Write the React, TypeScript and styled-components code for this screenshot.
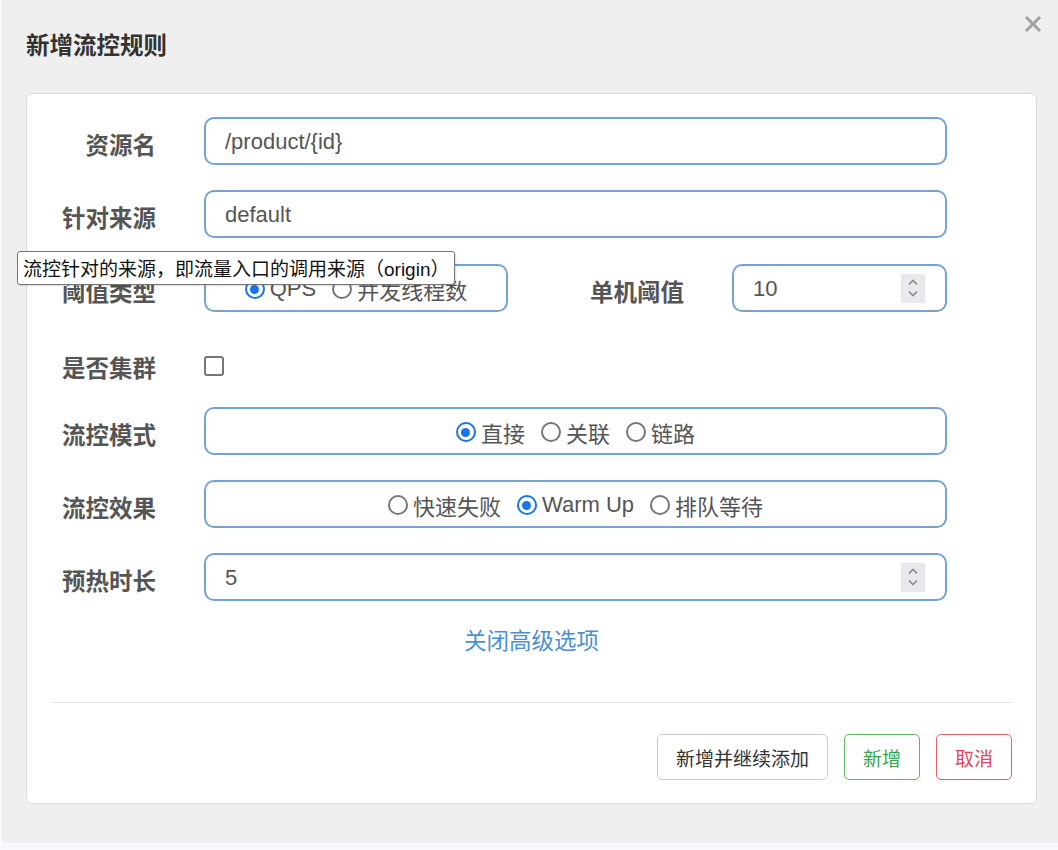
import React from 'react';
import styled, { createGlobalStyle } from 'styled-components';

const GlobalStyle = createGlobalStyle`
  html, body {
    margin: 0;
    padding: 0;
    background: #f8f9fc;
  }
  body {
    font-family: "Liberation Sans", "Noto Sans CJK SC", sans-serif;
  }
`;

const FONT = `"Liberation Sans", "Noto Sans CJK SC", sans-serif`;

const Dialog = styled.div`
  margin-left: 2px;
  width: 1056px;
  height: 843px;
  background: #efefef;
  border-radius: 0 0 0 4px;
  box-sizing: border-box;
  overflow: hidden;
`;

const Header = styled.div`
  height: 93px;
  display: flex;
  align-items: center;
  justify-content: space-between;
  padding: 0 16px 6px 24px;
  box-sizing: border-box;
`;

const Title = styled.h4`
  margin: 0;
  font-family: ${FONT};
  font-size: 23.5px;
  font-weight: bold;
  color: #333;
`;

const CloseButton = styled.button`
  align-self: flex-start;
  margin-top: 15px;
  border: 0;
  background: none;
  padding: 0;
  width: 18px;
  height: 18px;
  cursor: pointer;
`;

const Card = styled.div`
  margin: 0 21px 0 24px;
  background: #fff;
  border: 1px solid #dcdcdc;
  border-radius: 6px;
  padding: 23px 0 23px;
  position: relative;
`;

const Row = styled.div<{ $top?: number; $height?: number }>`
  display: flex;
  align-items: center;
  margin-top: ${(p) => (p.$top === undefined ? 25 : p.$top)}px;
  height: ${(p) => p.$height ?? 48}px;
  position: relative;
`;

const Label = styled.label<{ $width?: number }>`
  width: ${(p) => p.$width ?? 129}px;
  flex: 0 0 auto;
  text-align: right;
  margin-right: 48px;
  padding-top: 6px;
  font-family: ${FONT};
  font-size: 23.5px;
  font-weight: bold;
  color: #555;
  white-space: nowrap;
`;

const Field = styled.div<{ $width?: number }>`
  width: ${(p) => p.$width ?? 743}px;
  height: 48px;
  box-sizing: border-box;
  border: 2px solid #73a2d6;
  border-radius: 10px;
  display: flex;
  align-items: center;
  padding: 0 20px 0 19px;
  font-family: ${FONT};
  font-size: 22px;
  color: #555;
  flex: 0 0 auto;
`;

const RadioField = styled(Field)`
  justify-content: center;
  padding: 2px 10px 0;
`;

const RadioGroup = styled.div`
  display: flex;
  align-items: baseline;
  gap: 16px;
`;

const FieldText = styled.span`
  flex: 1;
  padding-top: 1px;
`;

const Spinner = styled.span`
  width: 24px;
  height: 29px;
  background: #e9e9ed;
  display: flex;
  align-items: center;
  justify-content: center;
`;

const RadioItem = styled.span`
  display: inline-flex;
  align-items: center;
  gap: 5px;
  white-space: nowrap;
`;

const RadioRing = styled.span<{ $checked?: boolean }>`
  flex: 0 0 auto;
  width: 20px;
  height: 20px;
  box-sizing: border-box;
  border-radius: 50%;
  border: 2.5px solid ${(p) => (p.$checked ? '#1a73e8' : '#767676')};
  display: inline-flex;
  align-items: center;
  justify-content: center;
  &::after {
    content: '';
    width: 9px;
    height: 9px;
    border-radius: 50%;
    background: ${(p) => (p.$checked ? '#1a73e8' : 'transparent')};
  }
`;

const Checkbox = styled.span`
  width: 20px;
  height: 20px;
  box-sizing: border-box;
  border: 2.5px solid #767676;
  border-radius: 3px;
  margin-top: 3px;
`;

const Tooltip = styled.div`
  position: absolute;
  left: -10px;
  top: 61px;
  z-index: 10;
  background: #fff;
  border: 1px solid #767676;
  border-radius: 3px;
  padding: 2px 5px 3px;
  font-family: ${FONT};
  font-size: 19px;
  color: #111;
  white-space: nowrap;
  box-shadow: 1px 1px 2px rgba(0, 0, 0, 0.15);
`;

const LinkRow = styled.div`
  margin-top: 26px;
  text-align: center;
  line-height: 30px;
`;

const Link = styled.a`
  font-family: ${FONT};
  font-size: 22.5px;
  color: #4a90d0;
  cursor: pointer;
  text-decoration: none;
`;

const Divider = styled.hr`
  margin: 43px 24px 0;
  border: 0;
  border-top: 1px solid #e5e5e5;
`;

const Footer = styled.div`
  display: flex;
  justify-content: flex-end;
  gap: 16px;
  margin-top: 31px;
  padding-right: 24px;
`;

const Button = styled.button<{ $tone?: 'default' | 'success' | 'danger' }>`
  height: 46px;
  padding: 0 18px;
  background: #fff;
  border-radius: 5px;
  font-family: ${FONT};
  font-size: 19px;
  cursor: pointer;
  border: 1px solid
    ${(p) => (p.$tone === 'success' ? '#5cb85c' : p.$tone === 'danger' ? '#e0606a' : '#cccccc')};
  color: ${(p) => (p.$tone === 'success' ? '#3aa24a' : p.$tone === 'danger' ? '#e0485a' : '#333')};
`;

const SpinIcon = () => (
  <svg width="14" height="22" viewBox="0 0 14 22">
    <path d="M3 7.5 L7 3.5 L11 7.5" fill="none" stroke="#8a8a8a" strokeWidth="1.6" />
    <path d="M3 14.5 L7 18.5 L11 14.5" fill="none" stroke="#8a8a8a" strokeWidth="1.6" />
  </svg>
);

const Radio = ({ label, checked }: { label: string; checked?: boolean }) => (
  <RadioItem>
    <RadioRing $checked={checked} />
    {label}
  </RadioItem>
);

export default function App() {
  return (
    <>
      <GlobalStyle />
      <Dialog>
        <Header>
          <Title>新增流控规则</Title>
          <CloseButton aria-label="close">
            <svg width="18" height="18" viewBox="0 0 18 18">
              <path d="M2 2 L16 16 M16 2 L2 16" stroke="#a0a0a0" strokeWidth="3" />
            </svg>
          </CloseButton>
        </Header>
        <Card>
          <Row $top={0}>
            <Label>资源名</Label>
            <Field>
              <FieldText>/product/{'{id}'}</FieldText>
            </Field>
          </Row>
          <Row>
            <Label>针对来源</Label>
            <Field>
              <FieldText>default</FieldText>
            </Field>
            <Tooltip>流控针对的来源，即流量入口的调用来源（origin）</Tooltip>
          </Row>
          <Row $top={26}>
            <Label>阈值类型</Label>
            <RadioField $width={304}>
              <RadioGroup>
                <Radio label="QPS" checked />
                <Radio label="并发线程数" />
              </RadioGroup>
            </RadioField>
            <Label $width={176}>单机阈值</Label>
            <Field $width={215}>
              <FieldText>10</FieldText>
              <Spinner>
                <SpinIcon />
              </Spinner>
            </Field>
          </Row>
          <Row $top={32} $height={40}>
            <Label>是否集群</Label>
            <Checkbox />
          </Row>
          <Row $top={23}>
            <Label>流控模式</Label>
            <RadioField>
              <RadioGroup>
                <Radio label="直接" checked />
                <Radio label="关联" />
                <Radio label="链路" />
              </RadioGroup>
            </RadioField>
          </Row>
          <Row>
            <Label>流控效果</Label>
            <RadioField>
              <RadioGroup>
                <Radio label="快速失败" />
                <Radio label="Warm Up" checked />
                <Radio label="排队等待" />
              </RadioGroup>
            </RadioField>
          </Row>
          <Row>
            <Label>预热时长</Label>
            <Field>
              <FieldText>5</FieldText>
              <Spinner>
                <SpinIcon />
              </Spinner>
            </Field>
          </Row>
          <LinkRow>
            <Link>关闭高级选项</Link>
          </LinkRow>
          <Divider />
          <Footer>
            <Button>新增并继续添加</Button>
            <Button $tone="success">新增</Button>
            <Button $tone="danger">取消</Button>
          </Footer>
        </Card>
      </Dialog>
    </>
  );
}
